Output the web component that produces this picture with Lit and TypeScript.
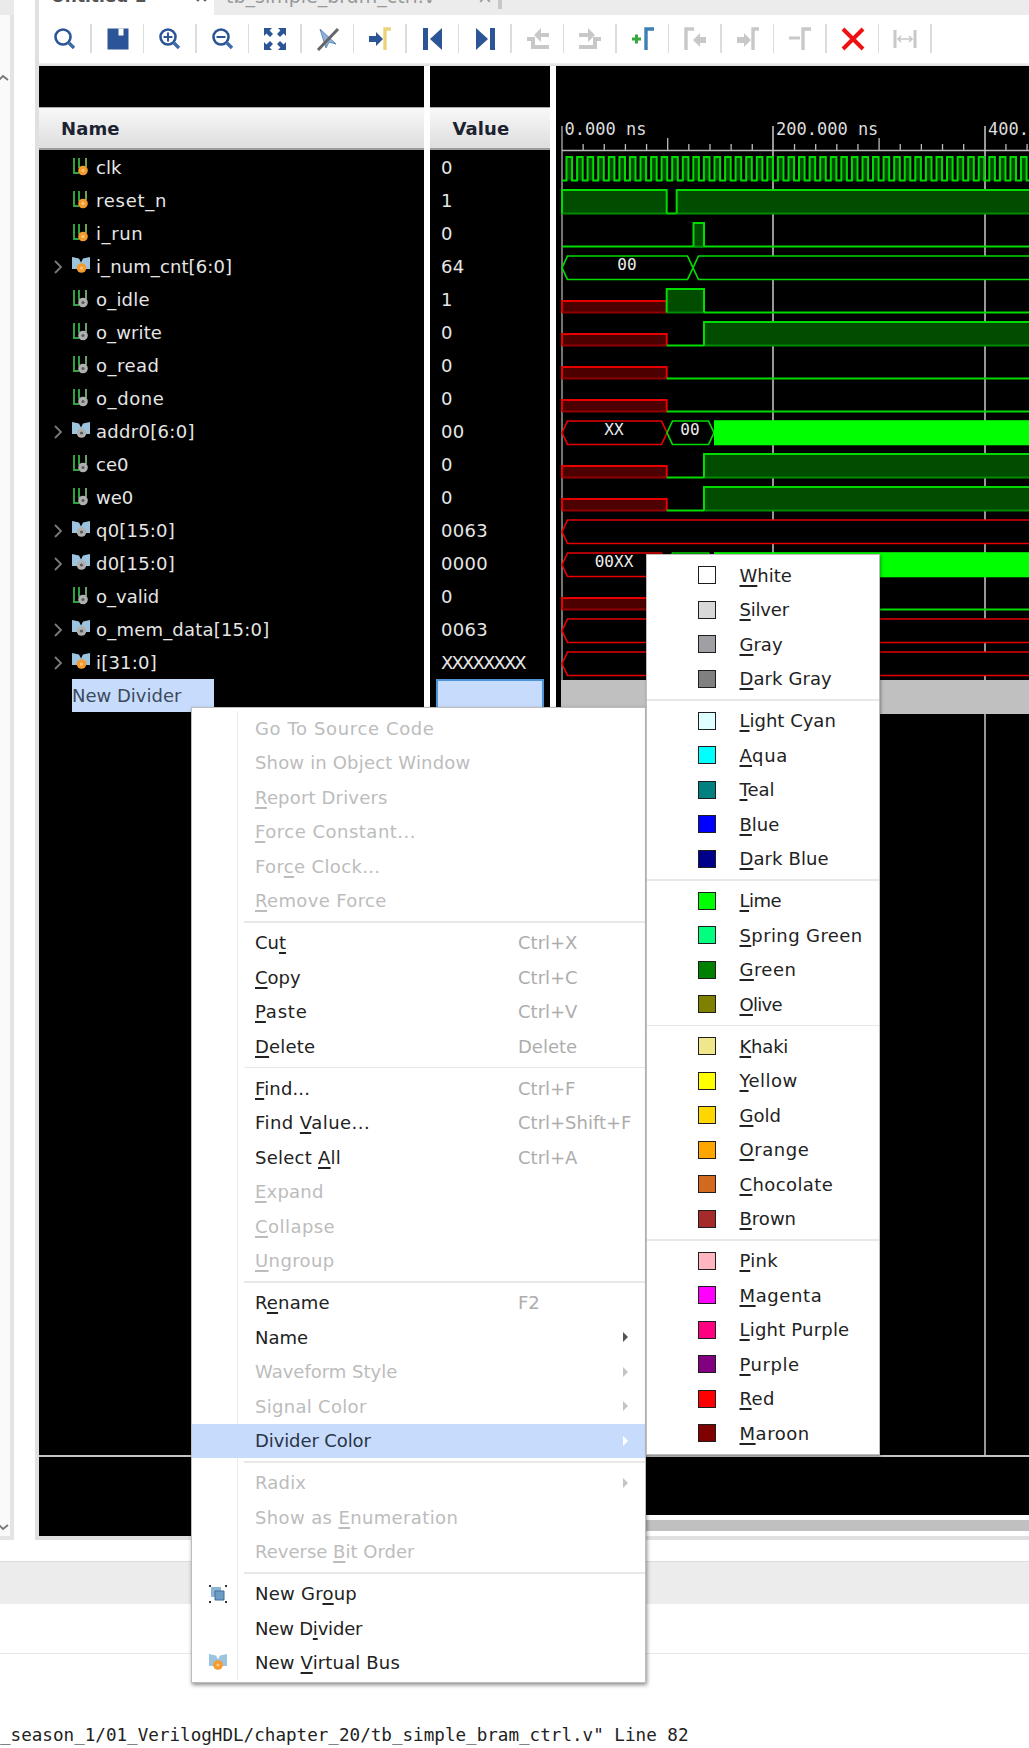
import { LitElement, html, css, svg } from "lit";
import { customElement } from "lit/decorators.js";

type Sig = { n: string; v: string; bus?: boolean; hot?: boolean; ls?: number };
const SIGS: Sig[] = [
  { n: "clk", v: "0", hot: true },
  { n: "reset_n", v: "1", hot: true, ls: 0.75 },
  { n: "i_run", v: "0", hot: true, ls: 0.6 },
  { n: "i_num_cnt[6:0]", v: "64", bus: true, hot: true, ls: 0.1 },
  { n: "o_idle", v: "1", ls: 0.2 },
  { n: "o_write", v: "0", ls: 0.1 },
  { n: "o_read", v: "0", ls: 0.5 },
  { n: "o_done", v: "0", ls: 0.6 },
  { n: "addr0[6:0]", v: "00", bus: true, ls: 0.3 },
  { n: "ce0", v: "0" },
  { n: "we0", v: "0" },
  { n: "q0[15:0]", v: "0063", bus: true, ls: 0.2 },
  { n: "d0[15:0]", v: "0000", bus: true, ls: 0.2 },
  { n: "o_valid", v: "0" },
  { n: "o_mem_data[15:0]", v: "0063", bus: true, ls: 0.2 },
  { n: "i[31:0]", v: "XXXXXXXX", bus: true, hot: true, ls: 0.2 },
];

type Item = { t?: string; u?: number; off?: boolean; key?: string; arrow?: boolean; hl?: boolean; ic?: string; sep?: boolean; ls?: number };
const MENU: Item[] = [
  { t: "Go To Source Code", off: true, ls: 0.62 },
  { t: "Show in Object Window", off: true, ls: 0.17 },
  { t: "Report Drivers", u: 0, off: true, ls: 0.17 },
  { t: "Force Constant...", u: 0, off: true, ls: 0.5 },
  { t: "Force Clock...", u: 3, off: true, ls: 0.35 },
  { t: "Remove Force", u: 0, off: true, ls: 0.35 },
  { sep: true },
  { t: "Cut", u: 2, key: "Ctrl+X" },
  { t: "Copy", u: 0, key: "Ctrl+C" },
  { t: "Paste", u: 0, key: "Ctrl+V", ls: 0.8 },
  { t: "Delete", u: 0, key: "Delete", ls: 0.2 },
  { sep: true },
  { t: "Find...", u: 0, key: "Ctrl+F", ls: 0.15 },
  { t: "Find Value...", u: 5, key: "Ctrl+Shift+F", ls: 0.45 },
  { t: "Select All", u: 7, key: "Ctrl+A", ls: 0.25 },
  { t: "Expand", u: 0, off: true, ls: 0.2 },
  { t: "Collapse", u: 0, off: true, ls: 0.45 },
  { t: "Ungroup", u: 0, off: true, ls: 0.4 },
  { sep: true },
  { t: "Rename", u: 1, key: "F2", ls: 0.15 },
  { t: "Name", arrow: true },
  { t: "Waveform Style", off: true, arrow: true },
  { t: "Signal Color", off: true, arrow: true, ls: 0.3 },
  { t: "Divider Color", arrow: true, hl: true, ls: -0.1 },
  { sep: true },
  { t: "Radix", off: true, arrow: true, ls: 0.2 },
  { t: "Show as Enumeration", u: 8, off: true, ls: 0.37 },
  { t: "Reverse Bit Order", u: 8, off: true },
  { sep: true },
  { t: "New Group", u: 6, ic: "group", ls: 0.25 },
  { t: "New Divider", u: 5, ls: -0.2 },
  { t: "New Virtual Bus", u: 4, ic: "bus", ls: 0.15 },
];

const COLORS: ([string, string, number?] | null)[] = [
  ["White", "#ffffff"], ["Silver", "#d8d8d8", -0.2], ["Gray", "#a0a0a4"], ["Dark Gray", "#808080", 0.1], null,
  ["Light Cyan", "#e0ffff"], ["Aqua", "#00ffff", 0.6], ["Teal", "#008080"], ["Blue", "#0000ff"], ["Dark Blue", "#00008b", 0.1], null,
  ["Lime", "#00ff00", -0.5], ["Spring Green", "#00ff7f", 0.4], ["Green", "#008000", 0.45], ["Olive", "#808000", -0.7], null,
  ["Khaki", "#f0e68c", -0.2], ["Yellow", "#ffff00", 0.45], ["Gold", "#ffd700"], ["Orange", "#ffa500", 0.55], ["Chocolate", "#d2691e", 0.4], ["Brown", "#a52a2a"], null,
  ["Pink", "#ffb6c1", 0.3], ["Magenta", "#ff00ff", 0.6], ["Light Purple", "#ff0080", 0.2], ["Purple", "#800080", 0.55], ["Red", "#ff0000", 0.4], ["Maroon", "#800000", 0.55],
];

const BLUE = "#2c5597";
const DIS = "#c8c8c8";
const ICONS = [
  svg`<circle cx="10" cy="10" r="7.5" fill="none" stroke="${BLUE}" stroke-width="2.6"/><path d="M16 16l5 5" stroke="#3d6aa8" stroke-width="3.4"/>`,
  svg`<path d="M1.5 1.5H22.5V22.5H1.5Z" fill="${BLUE}"/><path d="M12.5 1.5h5v7h-5z" fill="#fff"/>`,
  svg`<circle cx="10" cy="10" r="7.5" fill="none" stroke="${BLUE}" stroke-width="2.6"/><path d="M16 16l5 5" stroke="#3d6aa8" stroke-width="3.4"/><path d="M5.5 10h9M10 5.5v9" stroke="${BLUE}" stroke-width="2"/>`,
  svg`<circle cx="10" cy="10" r="7.5" fill="none" stroke="${BLUE}" stroke-width="2.6"/><path d="M16 16l5 5" stroke="#3d6aa8" stroke-width="3.4"/><path d="M5.5 10h9" stroke="${BLUE}" stroke-width="2"/>`,
  svg`<g fill="${BLUE}"><path d="M1 1h8L6.6 3.4 10 7 7 10 3.4 6.6 1 9z"/><path d="M23 1v8l-2.4-2.4L17 10l-3-3 3.4-3.6L15 1z"/><path d="M1 23v-8l2.4 2.4L7 14l3 3-3.4 3.6L9 23z"/><path d="M23 23h-8l2.4-2.4L14 17l3-3 3.6 3.4L23 15z"/></g>`,
  svg`<path d="M4 2l6 19 3-6 7 2z" fill="#8fb3d9" stroke="#5d88b8" stroke-width="1"/><path d="M2 23L22 2" stroke="#666" stroke-width="3"/>`,
  svg`<path d="M1 9h7V5l7 7-7 7v-4H1z" fill="${BLUE}"/><path d="M17 23V2h6" fill="none" stroke="#edd27c" stroke-width="3.4"/>`,
  svg`<path d="M2 1h5v22H2z" fill="${BLUE}"/><path d="M21 1v22L9 12z" fill="${BLUE}"/>`,
  svg`<path d="M17 1h5v22h-5z" fill="${BLUE}"/><path d="M3 1v22l12-11z" fill="${BLUE}"/>`,
  svg`<path d="M23 18H9V10H1v4h4v8h18z" fill="${DIS}"/><path d="M23 6h-8V1l-7 7 7 7v-5h8z" fill="${DIS}"/>`,
  svg`<path d="M1 18h14V10h8v4h-4v8H1z" fill="${DIS}"/><path d="M1 6h9V1l7 7-7 7v-5H1z" fill="${DIS}"/>`,
  svg`<path d="M1 12h9M5.500 7.500v9" stroke="#38a83c" stroke-width="3"/><path d="M15 23V2h8" fill="none" stroke="#3f7fb8" stroke-width="3.400"/>`,
  svg`<path d="M3 23V2h8" fill="none" stroke="${DIS}" stroke-width="3.400"/><path d="M23 10h-6V6l-7 7 7 7v-4h6z" fill="${DIS}"/>`,
  svg`<path d="M1 10h7V6l7 7-7 7v-4H1z" fill="${DIS}"/><path d="M17 23V2h6" fill="none" stroke="${DIS}" stroke-width="3.400"/>`,
  svg`<path d="M1 11h11" stroke="${DIS}" stroke-width="3"/><path d="M15 23V2h8" fill="none" stroke="${DIS}" stroke-width="3.400"/>`,
  svg`<path d="M2 2l20 20M22 2L2 22" stroke="#ee1111" stroke-width="4"/>`,
  svg`<path d="M2 3v18M22 3v18" stroke="${DIS}" stroke-width="3"/><path d="M5 12h14M8 9l-3 3 3 3M16 9l3 3-3 3" fill="none" stroke="${DIS}" stroke-width="1.600"/>`,
];

const top = (k: number) => 157 + 33 * k;
const bot = (k: number) => 180.5 + 33 * k;
const END = 1034;
const G = "#00dc00";
const GD = "#008a00";
const GF = "#004d00";
const R = "#e80000";
const RD = "#900000";
const RF = "#4d0000";
const SW = 2;

function clockPath(): string {
  let d = `M562 ${bot(0)}`;
  for (let x = 566.5; x < END; x += 10.57) {
    d += `H${x.toFixed(1)}V${top(0)}H${(x + 5.6).toFixed(1)}V${bot(0)}`;
  }
  return d + `H${END}`;
}
const high = (x1: number, x2: number, k: number) => svg`
  <rect x=${x1} y=${top(k)} width=${x2 - x1} height=${bot(k) - top(k)} fill=${GF}/>
  <path d="M${x1} ${bot(k)}H${x2}" stroke=${GD} stroke-width=${SW} fill="none"/>
  <path d="M${x1} ${bot(k)}V${top(k)}H${x2}V${bot(k)}" stroke=${G} stroke-width=${SW} fill="none"/>`;
const low = (x1: number, x2: number, k: number) =>
  svg`<path d="M${x1} ${bot(k)}H${x2}" stroke=${G} stroke-width=${SW} fill="none"/>`;
const red = (x1: number, x2: number, k: number) => svg`
  <rect x=${x1} y=${top(k) + 12} width=${x2 - x1} height=${bot(k) - top(k) - 12} fill=${RF}/>
  <path d="M${x1} ${bot(k)}H${x2}" stroke=${RD} stroke-width=${SW} fill="none"/>
  <path d="M${x1} ${bot(k)}V${top(k) + 12}H${x2}V${bot(k)}" stroke=${R} stroke-width=${SW} fill="none"/>`;
const hex = (x1: number, x2: number, k: number, c: string) => {
  const t = top(k), b = bot(k), m = (t + b) / 2;
  return svg`<path d="M${x1} ${m}L${x1 + 5.5} ${t}H${x2 - 5.5}L${x2} ${m}L${x2 - 5.5} ${b}H${x1 + 5.5}Z" fill="#000" stroke=${c} stroke-width="1.7"/>`;
};
const lime = (k: number) => svg`<rect x="714" y=${top(k) - 0.8} width=${END - 714} height=${bot(k) - top(k) + 1.6} fill="#00ff00"/>`;
const label = (x: number, y: number, s: string) => svg`<text class="wt" x=${x} y=${y} text-anchor="middle">${s}</text>`;

const ticks: number[] = [];
for (let i = 1; i < 24; i++) ticks.push(562 + 21.14 * i);

function waveform() {
  return svg`
    <svg class="wave" viewBox="556 66 473 1389" width="473" height="1389">
      <path d="M562 126V680" stroke="#9a9a9a" stroke-width="1.500"/>
      <path d="M773 126V1455M985 126V1455" stroke="#a8a8a8" stroke-width="1.800"/>
      <path d="M562 150.500H1029" stroke="#bbb" stroke-width="1.400"/>
      ${ticks.map((x, i) => {
        const major = (i + 1) % 10 === 0;
        const mid = (i + 1) % 5 === 0;
        return major ? null : svg`<path d="M${x} ${mid ? 138 : 144}V150" stroke="#bbb" stroke-width="1.300"/>`;
      })}
      <text class="rt" x="564.500" y="135">0.000 ns</text>
      <text class="rt" x="776" y="135">200.000 ns</text>
      <text class="rt" x="988" y="135">400.000 ns</text>

      <path d=${clockPath()} fill=${GF} stroke=${G} stroke-width=${SW}/>

      ${high(562, 666.7, 1)}
      ${low(666.7, 676.7, 1)}
      ${high(676.7, END, 1)}

      ${low(562, END, 2)}
      ${high(693.5, 704, 2)}

      ${hex(562, 693, 3, G)}
      ${hex(693, END + 20, 3, G)}
      ${label(627, 270, "00")}

      ${red(562, 666.7, 4)}
      ${high(666.7, 704, 4)}
      ${low(704, END, 4)}

      ${red(562, 666.7, 5)}
      ${low(666.7, 704, 5)}
      ${high(704, END, 5)}

      ${red(562, 666.7, 6)}
      ${low(666.7, END, 6)}

      ${red(562, 666.7, 7)}
      ${low(666.7, END, 7)}

      ${hex(562, 667, 8, R)}
      ${hex(667, 714, 8, G)}
      ${lime(8)}
      ${label(614, 435, "XX")}
      ${label(690, 435, "00")}

      ${red(562, 666.7, 9)}
      ${low(666.7, 704, 9)}
      ${high(704, END, 9)}

      ${red(562, 666.7, 10)}
      ${low(666.7, 704, 10)}
      ${high(704, END, 10)}

      ${hex(562, END + 20, 11, R)}

      ${hex(562, 667, 12, R)}
      ${hex(667, 714, 12, G)}
      ${lime(12)}
      ${label(614, 567, "00XX")}

      ${red(562, 666.7, 13)}
      ${low(666.7, END, 13)}

      ${hex(562, END + 20, 14, R)}
      ${hex(562, END + 20, 15, R)}

      <rect x="561" y="680" width="468" height="34" fill="#c0c0c0"/>
    </svg>`;
}

const busShape = svg`<path d="M0 0l7 1.500 2 4 2-4 7-1.500v12h-5l-4-5-4 5H0z" fill="#9cc4de"/>`;
function sigIcon(s: Sig) {
  const dot = s.hot
    ? svg`<circle cx="11" cy="12.500" r="4.800" fill="#f59a2c"/><circle cx="11" cy="12.500" r="1.600" fill="#f9c77d"/>`
    : svg`<circle cx="11" cy="12.500" r="4.800" fill="#b0b0b0"/><circle cx="11" cy="12.500" r="1.600" fill="#5c5c5c"/>`;
  if (s.bus) {
    return html`<svg class="sic" viewBox="0 0 18 18" width="18" height="18">${busShape}<g transform="translate(-1.500 -1.500)">${dot}</g></svg>`;
  }
  return html`<svg class="sic" viewBox="0 0 18 18" width="18" height="18">
    <path d="M2 0V15H7M7 0V10" fill="none" stroke="#2fa33f" stroke-width="2"/>
    <path d="M14 0V9" fill="none" stroke=${s.hot ? "#6fa04c" : "#6f9f6f"} stroke-width="2"/>
    ${dot}
  </svg>`;
}

function lab(t: string, u?: number) {
  if (u === undefined) return t;
  return html`${t.slice(0, u)}<u>${t[u]}</u>${t.slice(u + 1)}`;
}

@customElement("app-root")
export class AppRoot extends LitElement {
  static styles = css`
    :host {
      display: block;
      position: relative;
      width: 1029px;
      height: 1748px;
      overflow: hidden;
      background: #fff;
      font-family: "DejaVu Sans", sans-serif;
      font-size: 18px;
    }
    .top { display: flex; height: 1540px; }
    .rail {
      width: 14px; box-sizing: border-box; flex: none;
      background: #fafafa; border-right: 4px solid #e4e4e4; border-bottom: 4px solid #e4e4e4;
      margin-right: 21px; display: flex; flex-direction: column; justify-content: space-between;
      padding: 0 0 5px;
    }
    .railhead { height: 15px; width: 14px; background: #eaeaea; margin-bottom: 59px; }
    .railtop { display: block; }
    .chev { display: block; }
    .main {
      flex: 1; min-width: 0; box-sizing: border-box; display: flex; flex-direction: column;
      border-left: 4px solid #e0e0e0; border-bottom: 4px solid #e0e0e0;
    }
    .tabs { height: 15px; flex: none; display: flex; overflow: hidden; background: #fff; }
    .tab1 { width: 175px; flex: none; position: relative; overflow: hidden; }
    .tab2 { flex: 1; background: #ececec; position: relative; overflow: hidden; }
    .tabrow { display: flex; align-items: flex-end; height: 4px; padding-left: 12px; gap: 48px; color: #555; font-size: 17px; line-height: 4px; white-space: nowrap; }
    .tabrow.b { font-weight: bold; }
    .tabrow span { display: block; transform: translateY(-6px); }
    .tab2 .tabrow { color: #999; padding-left: 12px; font-size: 19px; gap: 42px; }
    .tabmark { width: 4px; height: 9px; background: #c8c8c8; position: absolute; left: 284px; top: 0; }
    .toolbar { height: 48px; flex: none; display: flex; background: #fff; }
    .tool {
      width: 52.5px; height: 48px; flex: none; box-sizing: border-box; position: relative;
      display: flex; align-items: center; justify-content: center;
    }
    .tool::after {
      content: ""; position: absolute; right: 0; top: 9px; height: 29px; width: 1.5px; background: #dcdcdc;
    }
    .shade { height: 3px; flex: none; background: linear-gradient(#f2f2f2, #dcdcdc); }
    .panes { display: flex; height: 1389px; flex: none; background: #000; }
    .col { background: #000; flex: none; display: flex; flex-direction: column; }
    .col.name { width: 385px; }
    .col.val { width: 120px; }
    .gap { width: 6px; flex: none; background: #fff; }
    .blackhead { height: 41px; flex: none; }
    .head {
      height: 43px; flex: none; box-sizing: border-box;
      background: linear-gradient(#f8f8f8, #dedede); border-bottom: 2px solid #9c9c9c; border-top: 1px solid #aaa;
      font-weight: bold; color: #1c2230; display: flex; align-items: center; letter-spacing: 0.1px;
    }
    .name .head { padding-left: 22px; }
    .val .head { padding-left: 22.5px; }
    .rows { padding-top: 0.5px; }
    .row {
      height: 33px; display: flex; align-items: center; color: #e6e6e6; white-space: nowrap; position: relative;
    }
    .name .row { padding-left: 33px; }
    .val .row { padding-left: 11px; letter-spacing: 0.3px; }
    .chevron { width: 18px; height: 14px; position: absolute; left: 15px; top: 10px; }
    .sic { flex: none; margin-right: 6px; }
    .val .row .x8 { letter-spacing: -1.85px; }
    .divname {
      background: #c7dcfd; color: #3c4a5c; height: 33px; line-height: 33px; width: 142px; box-sizing: border-box;
      white-space: nowrap;
    }
    .divval {
      margin: 0 6px 0 6px; height: 33px; width: 108px; box-sizing: border-box; background: #c7dcfd; border: 2px solid #4d94d6; border-bottom: none;
    }
    .wave { display: block; flex: none; }
    .wt { font: 16px "DejaVu Sans Mono", monospace; fill: #eee; }
    .rt { font: 17px "DejaVu Sans Mono", monospace; fill: #ddd; }
    .rule { height: 2px; flex: none; background: #c4c4c4; }
    .lower { flex: 1; display: flex; min-height: 0; }
    .lowerleft { width: 517px; flex: none; background: #000; }
    .lowerright { flex: 1; display: flex; flex-direction: column; }
    .lowerblack { height: 58px; flex: none; background: #000; }
    .scroll { flex: 1; background: #fff; padding: 5px 0; box-sizing: border-box; }
    .thumb { height: 11px; background: #c0c0c0; }
    .band { height: 21px; }
    .status { height: 43px; background: #ececec; border-top: 1px solid #dcdcdc; box-sizing: border-box; }
    .blank { height: 50px; border-bottom: 1.5px solid #e8e8e8; box-sizing: border-box; }
    .console {
      height: 94px; box-sizing: border-box; padding-top: 69px;
      font: 17.6px/24px "DejaVu Sans Mono", monospace; color: #222; white-space: pre;
    }

    .menu {
      position: absolute; background: #fff; border: 1px solid #bdbdbd; box-sizing: border-box;
      box-shadow: 1px 2px 4px rgba(0, 0, 0, 0.45); color: #222;
    }
    .m1 { left: 191px; top: 707px; width: 455px; height: 976px; padding: 3px 0; }
    .m2 { left: 646px; top: 554px; width: 234px; height: 901px; padding: 3px 0; box-shadow: 1px 1px 3px rgba(0, 0, 0, 0.35); }
    .item { height: 34.5px; display: flex; align-items: center; white-space: nowrap; }
    .item.off { color: #bcbcbc; }
    .item.hl { background: #c7dcfd; color: #2a3444; }
    .item.hl .gut { border-right-color: transparent; }
    .gut {
      width: 46px; height: 100%; flex: none; box-sizing: border-box; border-right: 1.5px solid #ececec;
      display: flex; align-items: center; justify-content: center; padding-left: 7px;
    }
    .lbl { margin-left: 17px; width: 263px; flex: none; }
    .key { color: #adadad; letter-spacing: 0; }
    .arr { margin-left: auto; margin-right: 17px; width: 0; height: 0; border-left: 5px solid #555; border-top: 5px solid transparent; border-bottom: 5px solid transparent; }
    .item.off .arr { border-left-color: #c4c4c4; }
    .item.hl .arr { border-left-color: #fff; }
    .sep { height: 7.5px; display: flex; }
    .sep .gut { height: 100%; }
    .sepline { flex: 1; margin-left: 6px; align-self: center; height: 1.5px; background: #e8e8e8; }
    .m2 .sepline { margin-left: 0; }
    u { text-decoration-thickness: 1.5px; text-underline-offset: 3px; }
    .citem { height: 34.5px; display: flex; align-items: center; white-space: nowrap; padding-left: 50.5px; gap: 24px; }
    .sw { width: 18px; height: 18px; flex: none; box-sizing: border-box; border: 1.5px solid #1e1e1e; }
  `;

  render() {
    return html`
      <div class="top">
        <div class="rail">
          <div class="railtop">
            <div class="railhead"></div>
            <svg class="chev" width="9" height="8" viewBox="0 0 9 8"><path d="M-1 6L3 2l5 4" fill="none" stroke="#777" stroke-width="1.800"/></svg>
          </div>
          <svg class="chev" width="9" height="8" viewBox="0 0 9 8"><path d="M-1 2L3 6l5-4" fill="none" stroke="#777" stroke-width="1.800"/></svg>
        </div>
        <div class="main">
          <div class="tabs">
            <div class="tab1"><div class="tabrow b"><span>Untitled 1</span><span>×</span></div></div>
            <div class="tab2"><div class="tabrow"><span>tb_simple_bram_ctrl.v</span><span>×</span></div><div class="tabmark"></div></div>
          </div>
          <div class="toolbar">
            ${ICONS.map(
              (ic) => html`<div class="tool"><svg width="24" height="24" viewBox="0 0 24 24">${ic}</svg></div>`
            )}
          </div>
          <div class="shade"></div>
          <div class="panes">
            <div class="col name">
              <div class="blackhead"></div>
              <div class="head">Name</div>
              <div class="rows">
                ${SIGS.map(
                  (s) => html`<div class="row">
                    ${s.bus
                      ? html`<svg class="chevron" viewBox="0 0 18 14" width="18" height="14"><path d="M1 1l6 6-6 6" fill="none" stroke="#7a7a7a" stroke-width="1.800"/></svg>`
                      : null}
                    ${sigIcon(s)}<span style="letter-spacing:${s.ls ?? 0}px">${s.n}</span>
                  </div>`
                )}
                <div class="row"><div class="divname">New Divider</div></div>
              </div>
            </div>
            <div class="gap"></div>
            <div class="col val">
              <div class="blackhead"></div>
              <div class="head">Value</div>
              <div class="rows">
                ${SIGS.map(
                  (s) => html`<div class="row"><span class=${s.v.length > 4 ? "x8" : ""}>${s.v}</span></div>`
                )}
                <div class="divval"></div>
              </div>
            </div>
            <div class="gap"></div>
            ${waveform()}
          </div>
          <div class="rule"></div>
          <div class="lower">
            <div class="lowerleft"></div>
            <div class="lowerright">
              <div class="lowerblack"></div>
              <div class="scroll"><div class="thumb"></div></div>
            </div>
          </div>
        </div>
      </div>
      <div class="band"></div>
      <div class="status"></div>
      <div class="blank"></div>
      <div class="console">_season_1/01_VerilogHDL/chapter_20/tb_simple_bram_ctrl.v" Line 82</div>

      <div class="menu m1">
        ${MENU.map((m) =>
          m.sep
            ? html`<div class="sep"><div class="gut"></div><div class="sepline"></div></div>`
            : html`<div class="item ${m.off ? "off" : ""} ${m.hl ? "hl" : ""}">
                <div class="gut">
                  ${m.ic === "group"
                    ? html`<svg width="20" height="20" viewBox="0 0 20 20">
                        <path d="M3 3h10v10H3z" fill="#8db4d4"/><path d="M7 7h9v9H7z" fill="#6f9cc2" stroke="#3f6f9c" stroke-width="1"/>
                        <path d="M1 1h2v2H1zM17 1h2v2h-2zM1 17h2v2H1zM17 17h2v2h-2z" fill="#333"/>
                      </svg>`
                    : m.ic === "bus"
                    ? html`<svg width="18" height="18" viewBox="0 0 18 18">${busShape}<circle cx="9" cy="11" r="4.800" fill="#f59a2c"/><circle cx="9" cy="11" r="1.600" fill="#f9c77d"/></svg>`
                    : null}
                </div>
                <div class="lbl" style="letter-spacing:${m.ls ?? 0}px">${lab(m.t!, m.u)}</div>
                ${m.key ? html`<div class="key">${m.key}</div>` : null}
                ${m.arrow ? html`<div class="arr"></div>` : null}
              </div>`
        )}
      </div>
      <div class="menu m2">
        ${COLORS.map((c) =>
          c
            ? html`<div class="citem">
                <div class="sw" style="background:${c[1]}"></div>
                <div style="letter-spacing:${c[2] ?? 0}px">${lab(c[0], 0)}</div>
              </div>`
            : html`<div class="sep"><div class="sepline"></div></div>`
        )}
      </div>
    `;
  }
}
